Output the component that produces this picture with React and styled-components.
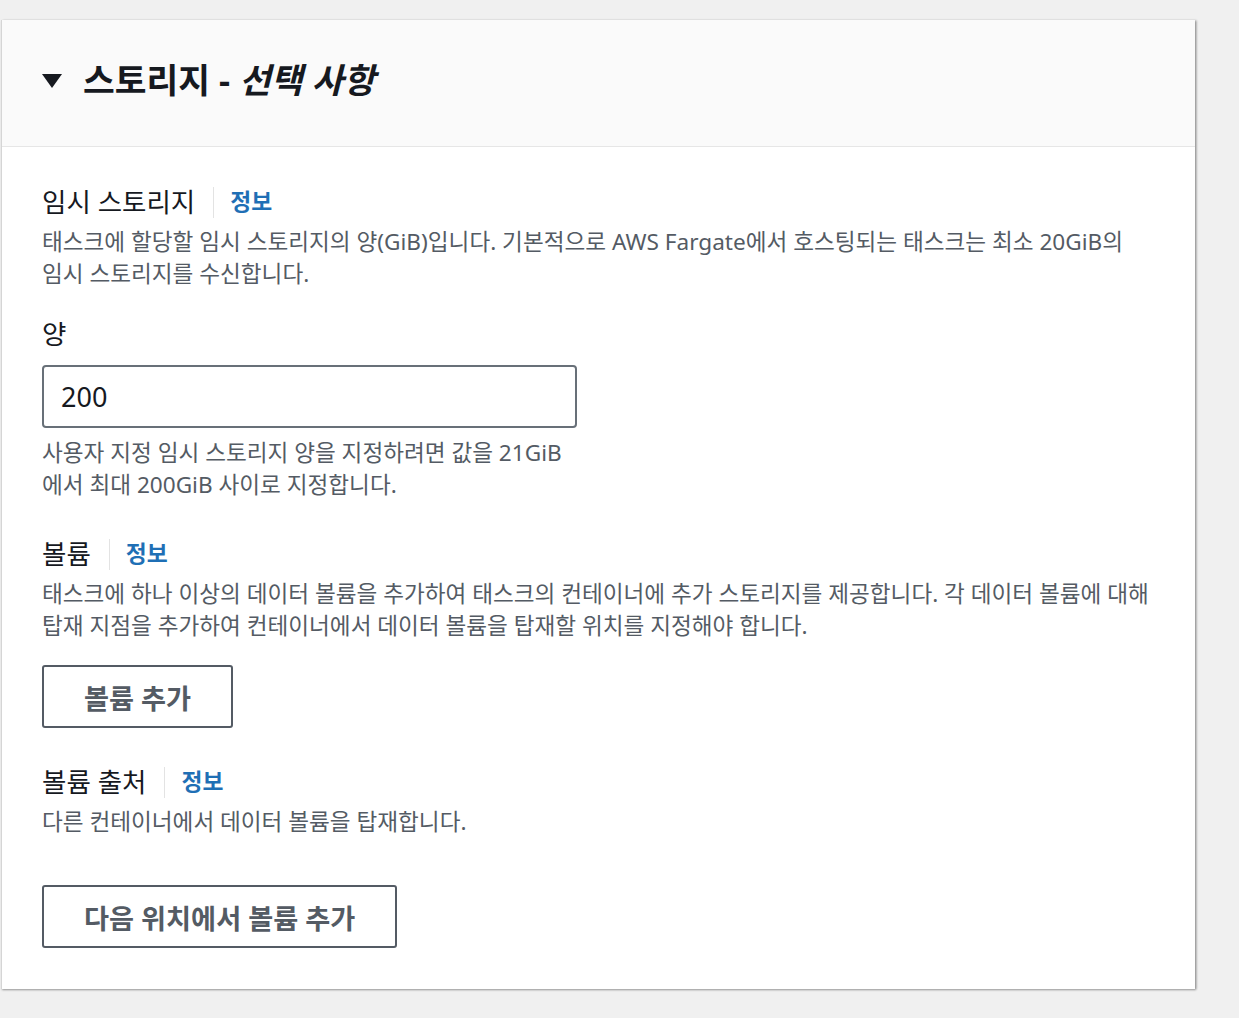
import React from 'react';
import styled, { createGlobalStyle } from 'styled-components';

const GlobalStyle = createGlobalStyle`
  html, body {
    margin: 0;
    padding: 0;
    background: #f0f0f0;
  }
  body {
    font-family: "Noto Sans", "Noto Sans CJK KR", sans-serif;
    color: #16191f;
  }
`;

const Page = styled.div`
  padding: 20px 44px 30px 1px;
`;

const Card = styled.section`
  background: #ffffff;
  border-left: 1px solid #d5d5d5;
  box-shadow: 1px 1px 2px rgba(0, 0, 0, 0.35), 2px 0 2px rgba(0, 0, 0, 0.12);
`;

const Header = styled.header`
  display: flex;
  align-items: center;
  gap: 21px;
  height: 120px;
  padding: 0 40px 6px;
  background: #fafafa;
  border-bottom: 1px solid #e6e6e6;
`;

const Caret = styled.span`
  width: 0;
  height: 0;
  border-left: 10px solid transparent;
  border-right: 10px solid transparent;
  border-top: 14px solid #16191f;
  margin-top: 2px;
`;

const Title = styled.h2`
  margin: 0;
  font-size: 34.5px;
  font-weight: 700;
  line-height: 42px;
  color: #16191f;

  em {
    font-style: italic;
  }
`;

const Body = styled.div`
  padding: 38px 40px 41px;
`;

const Field = styled.div`
  margin-top: ${(p) => p.$top || 0}px;
`;

const LabelRow = styled.div`
  display: flex;
  align-items: center;
  height: 34px;
`;

const Label = styled.span`
  font-size: 26.5px;
  line-height: 34px;
  color: #16191f;
`;

const Divider = styled.span`
  width: 1px;
  height: 31px;
  background: #e3e3e3;
  margin: 0 16px 0 18px;
`;

const InfoLink = styled.a`
  font-size: 22.8px;
  font-weight: 700;
  color: #1f6fb5;
  text-decoration: none;
  line-height: 34px;
`;

const Desc = styled.p`
  margin: ${(p) => p.$gap || 7}px 0 0;
  font-size: 22.6px;
  line-height: 32px;
  color: #545b64;
  white-space: nowrap;
`;

const Input = styled.input`
  display: block;
  box-sizing: border-box;
  width: 535px;
  height: 63px;
  margin-top: 14px;
  padding: 0 17px;
  border: 2px solid #687078;
  border-radius: 4px;
  font-family: "Noto Sans", "Noto Sans CJK KR", sans-serif;
  font-size: 27px;
  color: #16191f;
  background: #ffffff;
  outline: none;
`;

const Button = styled.button`
  display: block;
  box-sizing: border-box;
  height: 63px;
  margin-top: ${(p) => p.$top}px;
  padding: 0 40px;
  border: 2px solid #545b64;
  border-radius: 3px;
  background: #ffffff;
  font-family: "Noto Sans", "Noto Sans CJK KR", sans-serif;
  font-size: 27.2px;
  font-weight: 700;
  color: #545b64;
  cursor: pointer;
`;

const LabelWithInfo = ({ children }) => (
  <LabelRow>
    <Label>{children}</Label>
    <Divider />
    <InfoLink href="#">정보</InfoLink>
  </LabelRow>
);

export default function App() {
  return (
    <>
      <GlobalStyle />
      <Page>
        <Card>
          <Header>
            <Caret />
            <Title>
              스토리지 - <em>선택 사항</em>
            </Title>
          </Header>
          <Body>
            <Field>
              <LabelWithInfo>임시 스토리지</LabelWithInfo>
              <Desc>
                태스크에 할당할 임시 스토리지의 양(GiB)입니다. 기본적으로 AWS Fargate에서 호스팅되는 태스크는 최소 20GiB의
                <br />
                임시 스토리지를 수신합니다.
              </Desc>
            </Field>

            <Field $top={27}>
              <LabelRow>
                <Label>양</Label>
              </LabelRow>
              <Input defaultValue="200" />
              <Desc $gap={9}>
                사용자 지정 임시 스토리지 양을 지정하려면 값을 21GiB
                <br />
                에서 최대 200GiB 사이로 지정합니다.
              </Desc>
            </Field>

            <Field $top={36}>
              <LabelWithInfo>볼륨</LabelWithInfo>
              <Desc>
                태스크에 하나 이상의 데이터 볼륨을 추가하여 태스크의 컨테이너에 추가 스토리지를 제공합니다. 각 데이터 볼륨에 대해
                <br />
                탑재 지점을 추가하여 컨테이너에서 데이터 볼륨을 탑재할 위치를 지정해야 합니다.
              </Desc>
              <Button $top={23}>볼륨 추가</Button>
            </Field>

            <Field $top={37}>
              <LabelWithInfo>볼륨 출처</LabelWithInfo>
              <Desc>다른 컨테이너에서 데이터 볼륨을 탑재합니다.</Desc>
              <Button $top={47}>다음 위치에서 볼륨 추가</Button>
            </Field>
          </Body>
        </Card>
      </Page>
    </>
  );
}
